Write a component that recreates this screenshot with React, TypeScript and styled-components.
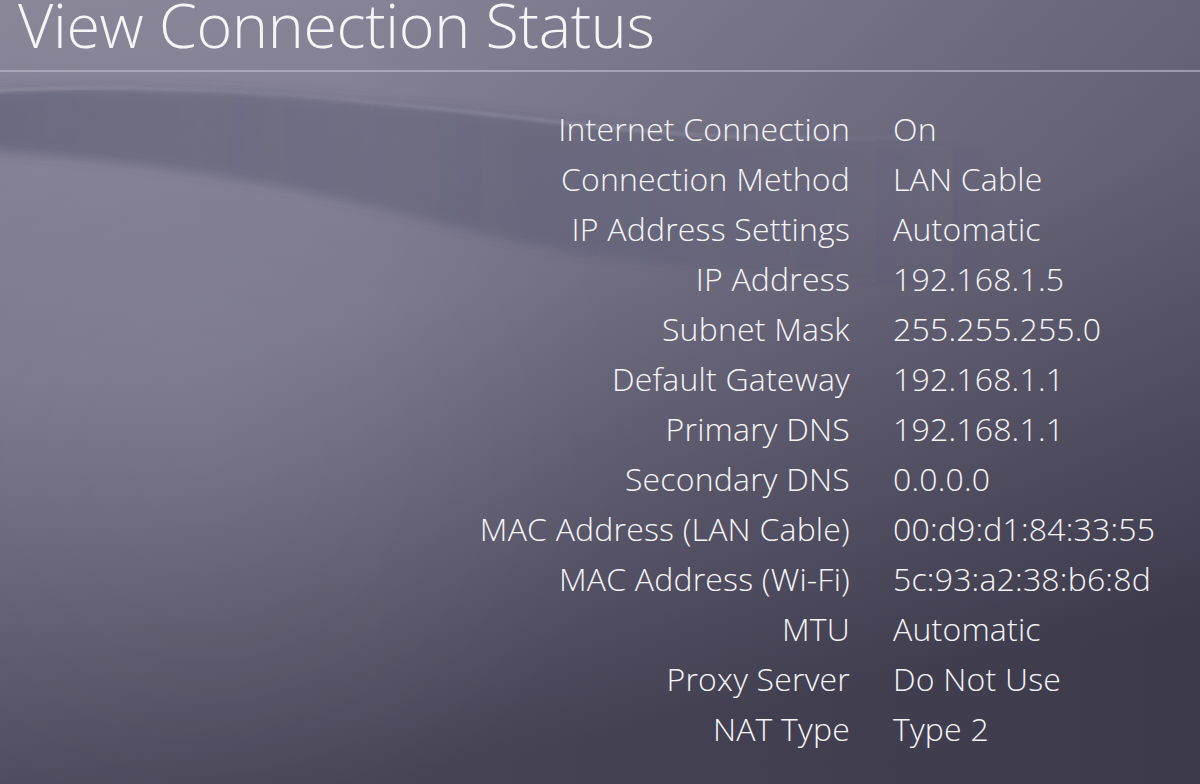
import styled, { createGlobalStyle } from "styled-components";

const GlobalStyle = createGlobalStyle`
  html, body {
    margin: 0;
    padding: 0;
    background: #6a6779;
  }
  body {
    font-family: "Open Sans", "DejaVu Sans", sans-serif;
  }
`;

const Screen = styled.div`
  position: relative;
  width: 1200px;
  height: 784px;
  overflow: hidden;
  color: #f5f5f8;
`;

const Backdrop = styled.svg`
  position: absolute;
  inset: 0;
  z-index: 0;
`;

const Content = styled.div`
  position: relative;
  z-index: 1;
`;

const Header = styled.header`
  height: 70px;
  border-bottom: 2px solid rgba(200, 198, 214, 0.55);
`;

const Title = styled.h1`
  margin: 0;
  padding-left: 18px;
  font-size: 61px;
  font-weight: 300;
  line-height: 50px;
  letter-spacing: -0.3px;
  white-space: nowrap;
`;

const StatusList = styled.dl`
  display: grid;
  grid-template-columns: 850px 1fr;
  column-gap: 43px;
  margin: 32px 0 0;
`;

const Label = styled.dt`
  text-align: right;
  font-size: 32px;
  font-weight: 300;
  line-height: 50px;
  letter-spacing: 0.2px;
  white-space: nowrap;
`;

const Value = styled.dd`
  margin: 0;
  font-size: 32px;
  font-weight: 300;
  line-height: 50px;
  letter-spacing: 0.2px;
  white-space: nowrap;
`;

const rows: [string, string][] = [
  ["Internet Connection", "On"],
  ["Connection Method", "LAN Cable"],
  ["IP Address Settings", "Automatic"],
  ["IP Address", "192.168.1.5"],
  ["Subnet Mask", "255.255.255.0"],
  ["Default Gateway", "192.168.1.1"],
  ["Primary DNS", "192.168.1.1"],
  ["Secondary DNS", "0.0.0.0"],
  ["MAC Address (LAN Cable)", "00:d9:d1:84:33:55"],
  ["MAC Address (Wi-Fi)", "5c:93:a2:38:b6:8d"],
  ["MTU", "Automatic"],
  ["Proxy Server", "Do Not Use"],
  ["NAT Type", "Type 2"],
];

function Waves() {
  return (
    <Backdrop width="1200" height="784" viewBox="0 0 1200 784">
      <defs>
        <linearGradient id="base" x1="0" y1="0" x2="0.3" y2="1">
          <stop offset="0" stopColor="#8a8799" />
          <stop offset="0.45" stopColor="#78758a" />
          <stop offset="1" stopColor="#474456" />
        </linearGradient>
        <linearGradient id="shade" x1="0" y1="0" x2="1" y2="0">
          <stop offset="0.3" stopColor="#1e1c2d" stopOpacity="0" />
          <stop offset="1" stopColor="#1e1c2d" stopOpacity="0.25" />
        </linearGradient>
        <radialGradient id="glow" cx="200" cy="430" r="430" gradientUnits="userSpaceOnUse">
          <stop offset="0" stopColor="#ffffff" stopOpacity="0.07" />
          <stop offset="1" stopColor="#ffffff" stopOpacity="0" />
        </radialGradient>
        <linearGradient id="band" x1="0" y1="0" x2="1000" y2="0" gradientUnits="userSpaceOnUse">
          <stop offset="0" stopColor="#4a4b62" stopOpacity="0.42" />
          <stop offset="0.6" stopColor="#4a4b62" stopOpacity="0.28" />
          <stop offset="1" stopColor="#4a4b62" stopOpacity="0" />
        </linearGradient>
        <linearGradient id="sheen" x1="0" y1="0" x2="960" y2="0" gradientUnits="userSpaceOnUse">
          <stop offset="0" stopColor="#e6e4f0" stopOpacity="0.22" />
          <stop offset="0.3" stopColor="#e6e4f0" stopOpacity="0.08" />
          <stop offset="0.65" stopColor="#e6e4f0" stopOpacity="0.2" />
          <stop offset="1" stopColor="#e6e4f0" stopOpacity="0" />
        </linearGradient>
        <filter id="soft" x="-20%" y="-60%" width="140%" height="220%">
          <feGaussianBlur stdDeviation="6" />
        </filter>
        <filter id="line" x="-20%" y="-200%" width="140%" height="500%">
          <feGaussianBlur stdDeviation="1.8" />
        </filter>
      </defs>
      <rect width="1200" height="784" fill="url(#base)" />
      <rect width="1200" height="784" fill="url(#shade)" />
      <rect width="1200" height="784" fill="url(#glow)" />
      <path
        d="M-20,90 C200,78 420,105 620,128 C760,142 880,140 1000,150 L1000,282 C850,280 700,272 560,250 C420,226 300,170 -20,150 Z"
        fill="url(#band)"
        filter="url(#soft)"
      />
      <path
        d="M-10,91 C200,79 420,106 620,129 C760,143 860,136 960,138"
        fill="none"
        stroke="url(#sheen)"
        strokeWidth="3"
        filter="url(#line)"
      />
    </Backdrop>
  );
}

export default function App() {
  return (
    <Screen>
      <GlobalStyle />
      <Waves />
      <Content>
        <Header>
          <Title>View Connection Status</Title>
        </Header>
        <StatusList>
          {rows.map(([label, value]) => (
            <>
              <Label key={label + "-l"}>{label}</Label>
              <Value key={label + "-v"}>{value}</Value>
            </>
          ))}
        </StatusList>
      </Content>
    </Screen>
  );
}
